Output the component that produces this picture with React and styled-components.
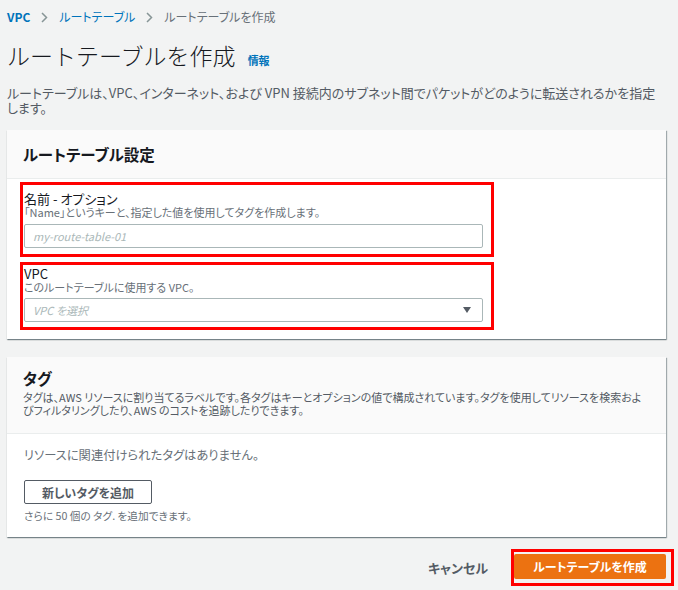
import styled, { createGlobalStyle } from "styled-components";

const GlobalStyle = createGlobalStyle`
  body {
    margin: 0;
    background: #f2f3f3;
    font-family: "Noto Sans CJK JP", "Noto Sans", sans-serif;
    font-feature-settings: "palt";
    color: #16191f;
  }
`;

const Page = styled.div`
  padding: 9px 12px 0 7px;
`;

const Breadcrumbs = styled.nav`
  display: flex;
  align-items: center;
  gap: 11px;
  font-size: 12px;
  line-height: 16px;
`;

const Crumb = styled.span`
  color: ${(p) => (p.$current ? "#687078" : "#0073bb")};
  font-weight: ${(p) => (p.$bold ? 700 : 400)};
`;

const TitleRow = styled.div`
  display: flex;
  align-items: baseline;
  margin-top: 17px;
`;

const Title = styled.h1`
  margin: 0;
  font-size: 23px;
  line-height: 26px;
  font-weight: 300;
  font-feature-settings: normal;
  color: #16191f;
`;

const InfoLink = styled.a`
  margin-left: 12px;
  font-size: 11px;
  font-weight: 700;
  color: #0073bb;
`;

const Description = styled.p`
  margin: 17px 0 0;
  font-size: 13px;
  line-height: 15px;
  color: #545b64;
`;

const Panel = styled.section`
  margin-top: ${(p) => p.$top}px;
  background: #fff;
  box-shadow: 1px 1px 1px 0 rgba(0, 28, 36, 0.3), 0 1px 1px 0 rgba(0, 28, 36, 0.3);
`;

const PanelHeader = styled.div`
  background: #fafafa;
  border-bottom: 1px solid #eaeded;
  padding: ${(p) => p.$pad};
`;

const PanelTitle = styled.h2`
  margin: 0;
  font-size: 15.5px;
  line-height: 20px;
  font-weight: 700;
`;

const PanelDesc = styled.p`
  margin: 3px 0 0;
  font-size: 11px;
  line-height: 13px;
  color: #545b64;
`;

const PanelBody = styled.div`
  padding: ${(p) => p.$pad};
`;

const Highlight = styled.div`
  border: 3px solid #ff0000;
  padding: ${(p) => p.$pad};
`;

const FieldBox = styled(Highlight)`
  width: 474px;
  box-sizing: border-box;
  margin-top: ${(p) => p.$top}px;
`;

const Label = styled.div`
  font-size: 13px;
  line-height: 15px;
`;

const Hint = styled.div`
  font-size: 11px;
  line-height: 13px;
  color: #687078;
`;

const Control = styled.div`
  margin-top: ${(p) => p.$top}px;
  height: 24px;
  box-sizing: border-box;
  border: 1px solid #aab7b8;
  border-radius: 2px;
  background: #fff;
  display: flex;
  align-items: center;
  justify-content: space-between;
  padding: 0 11px 0 8px;
`;

const Placeholder = styled.span`
  font-size: 11px;
  font-style: italic;
  color: #aab7b8;
`;

const Caret = styled.span`
  width: 0;
  height: 0;
  border-left: 4px solid transparent;
  border-right: 4px solid transparent;
  border-top: 6px solid #545b64;
`;

const EmptyText = styled.div`
  font-size: 12.3px;
  line-height: 16px;
  color: #687078;
`;

const SecondaryButton = styled.button`
  margin-top: 17px;
  width: 128px;
  height: 24px;
  border: 1px solid #545b64;
  border-radius: 2px;
  background: #fff;
  font-family: inherit;
  font-feature-settings: "palt";
  font-size: 12px;
  font-weight: 700;
  color: #545b64;
  padding: 0;
`;

const Caption = styled.div`
  margin-top: 5px;
  font-size: 10.7px;
  line-height: 14px;
  color: #687078;
`;

const Footer = styled.div`
  display: flex;
  justify-content: flex-end;
  align-items: center;
  margin: 12px -8px 0 0;
  gap: 23px;
`;

const TextButton = styled.button`
  border: none;
  background: none;
  padding: 0;
  font-family: inherit;
  font-feature-settings: "palt";
  font-size: 13px;
  font-weight: 700;
  color: #545b64;
`;

const PrimaryButton = styled.button`
  display: block;
  width: 152px;
  height: 25px;
  border: none;
  border-radius: 2px;
  background: #ec7211;
  color: #fff;
  font-family: inherit;
  font-feature-settings: "palt";
  font-size: 12px;
  font-weight: 700;
  padding: 0;
`;

const Chevron = () => (
  <svg width="7" height="11" viewBox="0 0 7 11">
    <path d="M1 1l4.5 4.5L1 10" fill="none" stroke="#879596" strokeWidth="1.5" />
  </svg>
);

export default function App() {
  return (
    <>
      <GlobalStyle />
      <Page>
        <Breadcrumbs>
          <Crumb $bold>VPC</Crumb>
          <Chevron />
          <Crumb>ルートテーブル</Crumb>
          <Chevron />
          <Crumb $current>ルートテーブルを作成</Crumb>
        </Breadcrumbs>

        <TitleRow>
          <Title>ルートテーブルを作成</Title>
          <InfoLink>情報</InfoLink>
        </TitleRow>
        <Description>
          ルートテーブルは、VPC、インターネット、および VPN
          接続内のサブネット間でパケットがどのように転送されるかを指定します。
        </Description>

        <Panel $top={15}>
          <PanelHeader $pad="14px 16px">
            <PanelTitle>ルートテーブル設定</PanelTitle>
          </PanelHeader>
          <PanelBody $pad="3px 0 9px 13px">
            <FieldBox $pad="6px 8px 6px 1px" $top={0}>
              <Label>名前 - オプション</Label>
              <Hint>「Name」というキーと、指定した値を使用してタグを作成します。</Hint>
              <Control $top={5}>
                <Placeholder>my-route-table-01</Placeholder>
              </Control>
            </FieldBox>
            <FieldBox $pad="1px 8px 5px 1px" $top={5}>
              <Label>VPC</Label>
              <Hint>このルートテーブルに使用する VPC。</Hint>
              <Control $top={4}>
                <Placeholder>VPC を選択</Placeholder>
                <Caret />
              </Control>
            </FieldBox>
          </PanelBody>
        </Panel>

        <Panel $top={18}>
          <PanelHeader $pad="11px 16px 16px">
            <PanelTitle>タグ</PanelTitle>
            <PanelDesc>
              タグは、AWS リソースに割り当てるラベルです。各タグはキーとオプションの値で構成されています。タグを使用してリソースを検索およびフィルタリングしたり、AWS のコストを追跡したりできます。
            </PanelDesc>
          </PanelHeader>
          <PanelBody $pad="13px 16px 14px 17px">
            <EmptyText>リソースに関連付けられたタグはありません。</EmptyText>
            <SecondaryButton>新しいタグを追加</SecondaryButton>
            <Caption>さらに 50 個の タグ. を追加できます。</Caption>
          </PanelBody>
        </Panel>

        <Footer>
          <TextButton>キャンセル</TextButton>
          <Highlight $pad="2px 5px 4px 0">
            <PrimaryButton>ルートテーブルを作成</PrimaryButton>
          </Highlight>
        </Footer>
      </Page>
    </>
  );
}
